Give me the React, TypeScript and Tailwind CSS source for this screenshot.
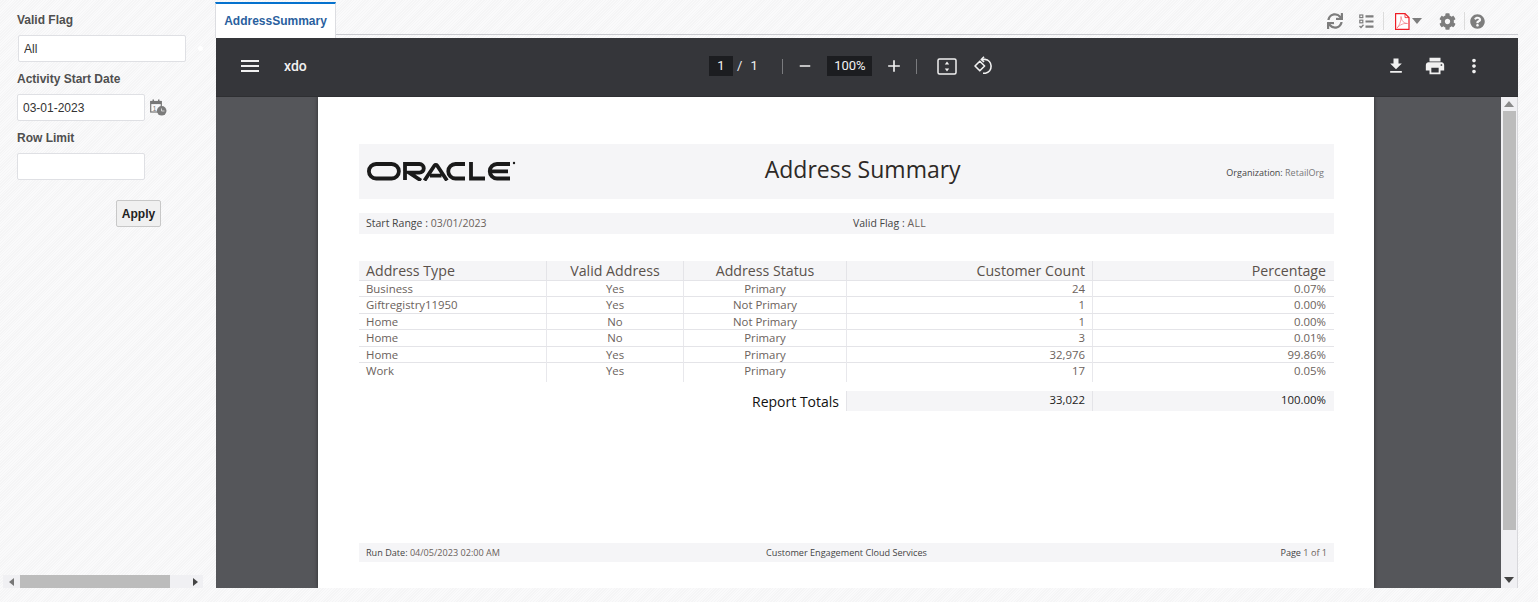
import React from "react";
import { FaSync, FaCog, FaQuestionCircle } from "react-icons/fa";
import { MdFileDownload, MdPrint, MdMoreVert, MdMenu, MdAdd, MdRemove } from "react-icons/md";

const rows = [
  ["Business", "Yes", "Primary", "24", "0.07%"],
  ["Giftregistry11950", "Yes", "Not Primary", "1", "0.00%"],
  ["Home", "No", "Not Primary", "1", "0.00%"],
  ["Home", "No", "Primary", "3", "0.01%"],
  ["Home", "Yes", "Primary", "32,976", "99.86%"],
  ["Work", "Yes", "Primary", "17", "0.05%"],
];

const cols = "grid grid-cols-[188px_137px_163px_246px_241px]";

function OracleLogo() {
  return (
    <svg width="149" height="20" viewBox="0 0 149 20" fill="none" stroke="#1a1a1a" strokeWidth="3.8" className="mb-[2px]">
      <rect x="1.9" y="3" width="30" height="14.5" rx="7.2" />
      <path d="M38 19 V3 H52.5 a4.3 4.3 0 0 1 0 8.6 H42 L54 19.5" />
      <path d="M57.5 19.5 L67.5 4.5 a1.6 1.6 0 0 1 2.6 0 L80 19.5 M63 14.6 H74.5" />
      <path d="M98 3 H88.5 a7.2 7.2 0 0 0 0 14.5 H98" />
      <path d="M104 1 V17.5 H118" />
      <path d="M143 3 H130 a7.2 7.2 0 0 0 0 14.5 H143 M123.5 10.3 H141" />
      <circle cx="147" cy="2" r="1.2" fill="#1a1a1a" stroke="none" />
    </svg>
  );
}

function ChecklistIcon() {
  return (
    <svg width="15" height="15" viewBox="0 0 15 15" fill="none" stroke="#7d7d7d">
      <rect x="0.8" y="1" width="3" height="2.6" strokeWidth="1.2" />
      <rect x="0.8" y="6.2" width="3" height="2.6" strokeWidth="1.2" />
      <path d="M0.5 12 L2 13.5 L4.5 10.8" strokeWidth="1.3" />
      <path d="M6.5 2.3 H14.5 M6.5 7.5 H14.5 M6.5 12.6 H14.5" strokeWidth="2.2" />
    </svg>
  );
}

function PdfIcon() {
  return (
    <svg width="15" height="17" viewBox="0 0 15 17" fill="none" stroke="#ee1c25">
      <path d="M0.6 0.6 H10 L14 4.6 V16.4 H0.6 Z" strokeWidth="1.2" fill="#fff" />
      <path d="M10 0.6 V4.6 H14" strokeWidth="0.8" />
      <path d="M2 15 C4 13 6.5 8 6 3.5 C6.5 8 9 10.5 12.5 10.5 C9 10 5 11.5 2 15 Z" strokeWidth="0.7" stroke="#f0717a" />
    </svg>
  );
}

function CalendarIcon() {
  return (
    <svg width="17" height="17" viewBox="0 0 17 17" className="shrink-0">
      <rect x="0.7" y="2.5" width="10.6" height="10.5" fill="none" stroke="#777" strokeWidth="1.2" />
      <rect x="0.7" y="2.5" width="10.6" height="2.6" fill="#777" />
      <rect x="2.5" y="0.5" width="1.5" height="3" fill="#777" />
      <rect x="8" y="0.5" width="1.5" height="3" fill="#777" />
      <text x="2.8" y="11.5" fontSize="6.5" fill="#777" fontFamily="Liberation Sans, sans-serif">1</text>
      <circle cx="11.7" cy="11.8" r="4.8" fill="#7b7b7b" />
      <path d="M11.5 9.5 V12 H14.5" stroke="#ddd" strokeWidth="0.9" fill="none" />
    </svg>
  );
}

function FitIcon() {
  return (
    <svg width="20" height="17" viewBox="0 0 20 17" fill="none">
      <rect x="1" y="1" width="18" height="15" rx="1.5" stroke="#f1f1f1" strokeWidth="1.5" />
      <path d="M10 3.6 L12.2 6.4 H7.8 Z M10 13.4 L12.2 10.6 H7.8 Z" fill="#f1f1f1" />
    </svg>
  );
}

function RotateIcon() {
  return (
    <svg width="20" height="20" viewBox="0 0 20 20" fill="none" stroke="#f1f1f1" strokeWidth="1.6">
      <path d="M6.8 5.2 L2 10 L6.8 14.8 L11.6 10 Z" strokeLinejoin="round" />
      <path d="M9 3.4 H12 A7 7 0 0 1 12.5 17.2 H10" />
      <path d="M11 0.8 L8.4 3.4 L11 6" />
    </svg>
  );
}

function Triangle({ dir, color }: { dir: "l" | "r" | "u" | "d"; color: string }) {
  const p = { l: "7,0 7,10 0,5", r: "0,0 0,10 7,5", u: "0,6 10,6 5,0", d: "0,0 10,0 5,6" }[dir];
  const horiz = dir === "l" || dir === "r";
  return (
    <svg width={horiz ? 5 : 10} height={horiz ? 8 : 6} viewBox={horiz ? "0 0 7 10" : "0 0 10 6"} preserveAspectRatio="none">
      <polygon points={p} fill={color} />
    </svg>
  );
}

export default function App() {
  return (
    <div className="w-[1538px] h-[602px] overflow-hidden flex bg-[#f8f8f9] bg-[repeating-linear-gradient(135deg,#f5f5f6_0px,#f5f5f6_1px,#fafafb_1px,#fafafb_2px)] font-['Liberation_Sans',Arial,sans-serif]">
      {/* Sidebar */}
      <aside className="w-[215px] h-[588px] shrink-0 flex flex-col justify-between">
        <div className="pl-[17px] pt-[13px] flex flex-col">
          <label className="text-[12px] leading-[14px] font-bold text-[#4f4f4f]">Valid Flag</label>
          <div className="relative mt-[8px] ml-px w-[168px] h-[27px]">
            <input readOnly value="All" className="w-full h-full bg-white border border-[#dfe0e4] rounded-[2px] px-[5px] text-[12px] text-[#333] outline-none" />
            <span className="absolute left-[180px] top-[11px] w-[5px] h-[5px] rounded-full bg-white" />
          </div>
          <label className="mt-[10px] text-[12px] leading-[14px] font-bold text-[#4f4f4f]">Activity Start Date</label>
          <div className="mt-[8px] flex items-center gap-[5px]">
            <input readOnly value="03-01-2023" className="w-[128px] h-[27px] bg-white border border-[#dfe0e4] rounded-[2px] px-[5px] text-[12px] text-[#333] outline-none" />
            <CalendarIcon />
          </div>
          <label className="mt-[10px] text-[12px] leading-[14px] font-bold text-[#4f4f4f]">Row Limit</label>
          <input readOnly className="mt-[8px] w-[128px] h-[27px] bg-white border border-[#dfe0e4] rounded-[2px] outline-none" />
          <div className="mt-[20px] ml-[99px]">
            <button className="w-[45px] h-[27px] bg-[#f0f0f0] border border-[#c8c8c8] rounded-[2px] text-[12px] font-bold text-[#222]">Apply</button>
          </div>
        </div>
        <div className="ml-[3px] mr-[12px] h-[13px] bg-[#f0f0f3] flex items-center">
          <div className="w-[17px] flex justify-center"><Triangle dir="l" color="#777" /></div>
          <div className="w-[150px] h-full bg-[#bcbcbc]" />
          <div className="flex-1 flex justify-center pl-[17px]"><Triangle dir="r" color="#444" /></div>
        </div>
      </aside>

      {/* Main */}
      <main className="w-[1303px] h-[588px] shrink-0 flex flex-col">
        <div className="h-[38px] flex shrink-0 pt-[2px]">
          <div className="w-[121px] h-[36px] bg-white border-t-2 border-t-[#0572ce] border-x border-x-[#dcdde1] flex items-center justify-center text-[12px] font-bold text-[#2a5f9e] shrink-0">AddressSummary</div>
          <div className="flex-1 h-[33px] pt-[6px] border-b border-[#c9cacf] flex items-center justify-end text-[#7d7d7d] pr-[33px]">
            <FaSync size={16} />
            <div className="ml-[16px]"><ChecklistIcon /></div>
            <div className="ml-[9px] w-px h-[18px] bg-[#dcdcdc]" />
            <div className="ml-[11px]"><PdfIcon /></div>
            <div className="ml-[2px]"><Triangle dir="d" color="#7d7d7d" /></div>
            <div className="ml-[17px]"><FaCog size={17} /></div>
            <div className="ml-[8px] w-px h-[18px] bg-[#dcdcdc]" />
            <div className="ml-[5px]"><FaQuestionCircle size={15} /></div>
          </div>
        </div>

        <div className="ml-px h-[59px] shrink-0 pb-[2px] bg-[#35363a] border-b border-[#2e2f32] flex items-center text-[#f1f1f1] pl-[22px] pr-[37px]">
          <MdMenu size={24} />
          <span className="ml-[22px] w-[148px] font-['Roboto',sans-serif] text-[14px] font-medium">xdo</span>
          <div className="ml-[277px] flex items-center font-['Roboto',sans-serif] text-[13px]">
            <span className="w-[24px] h-[20px] bg-[#1c1d20] flex items-center justify-center">1</span>
            <span className="ml-[4px]">/</span>
            <span className="ml-[8px] w-[32px]">1</span>
            <span className="w-px h-[15px] bg-[#7a7b7e]" />
            <span className="ml-[13px]"><MdRemove size={18} /></span>
            <span className="ml-[13px] w-[45px] h-[20px] bg-[#1c1d20] flex items-center justify-center">100%</span>
            <span className="ml-[12px]"><MdAdd size={20} /></span>
            <span className="ml-[12px] w-px h-[15px] bg-[#7a7b7e]" />
            <span className="ml-[20px]"><FitIcon /></span>
            <span className="ml-[16px]"><RotateIcon /></span>
          </div>
          <div className="ml-auto flex items-center gap-[18px]">
            <MdFileDownload size={20} />
            <MdPrint size={22} />
            <MdMoreVert size={22} className="ml-[-1px] mr-[-4px]" />
          </div>
        </div>

        <div className="ml-px flex-1 min-h-0 flex">
          <div className="flex-1 bg-[#55565a] pl-[102px] pr-[127px] overflow-hidden">
            <div className="h-full bg-white px-[41px] pt-[47px] font-['Open_Sans',sans-serif] text-[#6b625c] shadow-[0_0_4px_rgba(0,0,0,0.5)]">
              <div className="w-[975px] h-[55px] bg-[#f5f5f7] flex items-center pl-[8px] pr-[10px]">
                <OracleLogo />
                <div className="flex-1 text-center text-[23px] text-[#2d2926] pr-[17px] pb-[5px]">Address Summary</div>
                <div className="text-[9px] text-[#444] mt-[3px]">Organization: <span className="text-[#777]">RetailOrg</span></div>
              </div>
              <div className="mt-[14px] w-[975px] h-[21px] bg-[#f5f5f7] flex items-center pl-[7px] text-[10.5px]">
                <div className="w-[487px]"><span className="text-[#444]">Start Range : </span>03/01/2023</div>
                <div><span className="text-[#444]">Valid Flag : </span><span className="tracking-[0.4px]">ALL</span></div>
              </div>

              <div className="mt-[27px] w-[975px]">
                <div className={`${cols} h-[20px] bg-[#f5f5f7] border-b border-[#e4e4e8] text-[14.2px] leading-[20px] text-[#5a514b]`}>
                  <div className="pl-[7px] border-r border-[#e4e4e8]">Address Type</div>
                  <div className="text-center border-r border-[#e4e4e8]">Valid Address</div>
                  <div className="text-center border-r border-[#e4e4e8]">Address Status</div>
                  <div className="text-right pr-[7px] border-r border-[#e4e4e8]">Customer Count</div>
                  <div className="text-right pr-[8px]">Percentage</div>
                </div>
                {rows.map((r, i) => (
                  <div key={i} className={`${cols} text-[11.4px] leading-[16px] ${i < 5 ? "h-[16.4px] border-b border-[#e4e4e8]" : "h-[19px]"}`}>
                    <div className="pl-[7px] border-r border-[#e8e8ec]">{r[0]}</div>
                    <div className="text-center border-r border-[#e8e8ec]">{r[1]}</div>
                    <div className="text-center border-r border-[#e8e8ec]">{r[2]}</div>
                    <div className="text-right pr-[7px] border-r border-[#e8e8ec]">{r[3]}</div>
                    <div className="text-right pr-[8px]">{r[4]}</div>
                  </div>
                ))}
                <div className={`${cols} grid-rows-[20px] mt-[9px] h-[20px] leading-[18px] text-[#222]`}>
                  <div className="col-span-3 text-right pr-[7px] text-[14px] text-[#111] leading-[22px] border-r border-[#e4e4e8]">Report Totals</div>
                  <div className="text-right pr-[7px] text-[11.4px] bg-[#f5f5f7] border-r border-[#e4e4e8]">33,022</div>
                  <div className="text-right pr-[8px] text-[11.4px] bg-[#f5f5f7]">100.00%</div>
                </div>
              </div>

              <div className="mt-[132px] w-[975px] h-[19px] bg-[#f5f5f7] grid grid-cols-3 items-center px-[7px] text-[9.1px]">
                <div><span className="text-[#444]">Run Date: </span>04/05/2023 02:00 AM</div>
                <div className="text-center text-[#444]">Customer Engagement Cloud Services</div>
                <div className="text-right"><span className="text-[#444]">Page </span>1 of 1</div>
              </div>
            </div>
          </div>
          <div className="w-[17px] shrink-0 bg-[#f0f0f3] border-r border-[#d8d8dc] flex flex-col items-center justify-between pb-[5px]">
            <div className="flex flex-col items-center w-full">
              <div className="h-[14px] flex items-center"><Triangle dir="u" color="#8a8a8a" /></div>
              <div className="w-[13px] h-[419px] bg-[#bcbcbc]" />
            </div>
            <Triangle dir="d" color="#444" />
          </div>
        </div>
      </main>
    </div>
  );
}
